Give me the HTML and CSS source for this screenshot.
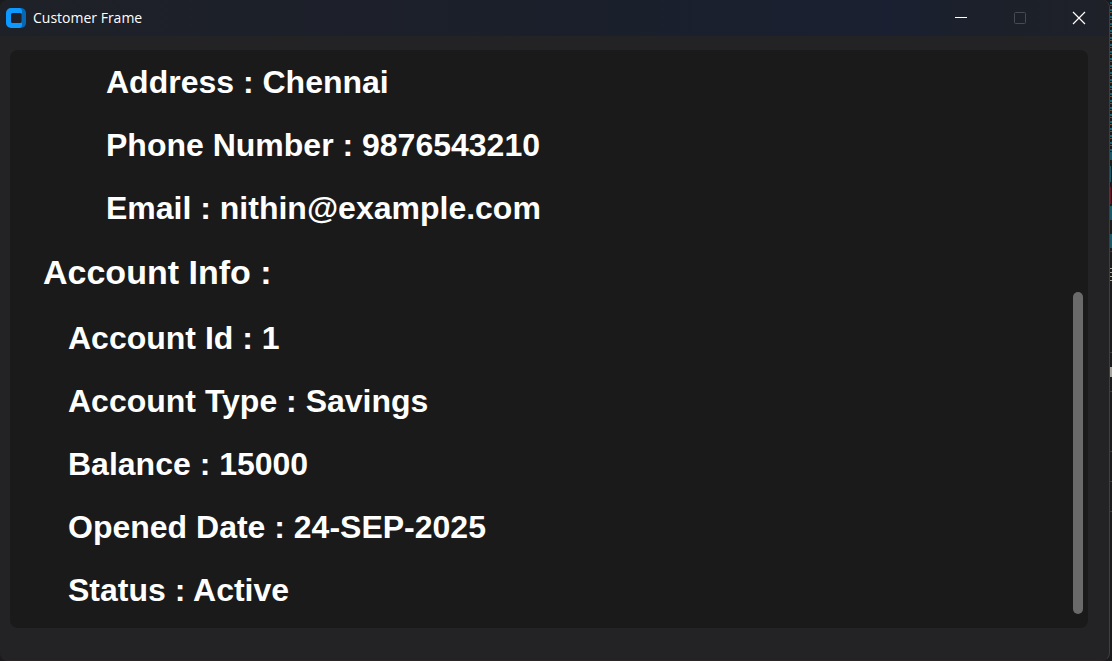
FILE: index.html
```html
<!DOCTYPE html>
<html lang="en">
<head>
<meta charset="utf-8">
<title>Customer Frame</title>
<link rel="stylesheet" href="styles.css">
</head>
<body>
<div class="desktop">
  <div class="window">
    <header class="titlebar">
      <svg class="logo" width="20" height="20" viewBox="0 0 20 20" aria-hidden="true">
        <path d="M11 0h4a5 5 0 0 1 5 5v10a5 5 0 0 1-5 5h-4z" fill="#0667b5"/>
        <path fill-rule="evenodd" d="M5 0h9l2 2v3l-1.500 1.500V13.500L16 15v3l-2 2H5a5 5 0 0 1-5-5V5a5 5 0 0 1 5-5z" fill="#0d99ff"/>
        <rect x="5" y="5" width="10.500" height="10" rx="1.500" fill="#1e2129"/>
      </svg>
      <h1 class="title">Customer Frame</h1>
      <div class="controls">
        <button class="control" aria-label="Minimize"><svg width="14" height="14" viewBox="0 0 14 14"><path d="M1 6.500h12" stroke="#fff"/></svg></button>
        <button class="control" aria-label="Maximize" disabled><svg width="14" height="14" viewBox="0 0 14 14"><rect x="1.500" y="1.500" width="11" height="11" rx="1" fill="none" stroke="#474a53"/></svg></button>
        <button class="control" aria-label="Close"><svg width="14" height="14" viewBox="0 0 14 14"><path d="M1 1l12 12M13 1L1 13" stroke="#fff" stroke-width="1.200"/></svg></button>
      </div>
    </header>
    <main class="panel">
      <div class="content">
        <div class="group nested">
          <p class="row">Address : Chennai</p>
          <p class="row">Phone Number : 9876543210</p>
          <p class="row">Email : nithin@example.com</p>
        </div>
        <h2 class="heading">Account Info :</h2>
        <div class="group">
          <p class="row">Account Id : 1</p>
          <p class="row">Account Type : Savings</p>
          <p class="row">Balance : 15000</p>
          <p class="row">Opened Date : 24-SEP-2025</p>
          <p class="row">Status : Active</p>
        </div>
      </div>
      <div class="scrollbar"><div class="thumb"></div></div>
    </main>
  </div>
  <svg class="backdrop" viewBox="0 0 2 661" preserveAspectRatio="none" aria-hidden="true">
    <path d="M1 2v150" stroke="#176477" stroke-width="2" stroke-dasharray="2 5"/>
    <path d="M1 5v145" stroke="#6b4e3b" stroke-width="2" stroke-dasharray="1 6"/>
    <path d="M1 152v8M1 206v14M1 234v14" stroke="#1a5a68" stroke-width="2"/>
    <path d="M0 166v16" stroke="#1a5a68" stroke-width="2"/>
    <path d="M0 187v17" stroke="#6b1624" stroke-width="2"/>
    <path d="M1 268v13" stroke="#a3a39b" stroke-width="2" stroke-dasharray="1 3"/>
    <path d="M1 367v10" stroke="#a3a39b" stroke-width="2"/>
    <path d="M1 251v1M1 352v1M1 391v1M1 451v1M1 481v1M1 511v1" stroke="#3b3b3d" stroke-width="2"/>
  </svg>
</div>
</body>
</html>
```
FILE: styles.css
```css
* { box-sizing: border-box; }
body {
  margin: 0;
  background: #1b1a1c;
  color: #fff;
  font-family: "Liberation Sans", Arial, sans-serif;
}
.desktop {
  display: flex;
  min-height: 100vh;
}
.window {
  flex: 1;
  display: flex;
  flex-direction: column;
  border-right: 1px solid #3e3f42;
  border-bottom: 1px solid #2c2527;
  border-radius: 8px;
  background: #232325;
  overflow: hidden;
}
.backdrop {
  width: 2px;
  height: 100vh;
}
.titlebar {
  display: flex;
  align-items: center;
  height: 36px;
  padding: 0 1px 0 6px;
  background: linear-gradient(90deg, #1e2127, #1b1f2b 50%, #1a2031 80%, #1c202a 90%, #1e2128);
}
.title {
  flex: 1;
  margin: 0 0 0 7px;
  font: 400 14px/20px "Open Sans", "Noto Sans", sans-serif;
}
.controls { display: flex; }
.control {
  display: flex;
  align-items: center;
  justify-content: center;
  width: 59px;
  height: 36px;
  padding: 0;
  border: 0;
  background: none;
}
.panel {
  display: flex;
  flex: 1;
  margin: 14px 21px 32px 10px;
  border-radius: 8px;
  background: #1a1a1a;
}
.content {
  flex: 1;
  padding: 1px 0 5px 33px;
}
.group { padding-left: 25px; }
.nested { padding-left: 63px; }
.row {
  margin: 0;
  font-size: 32px;
  font-weight: 700;
  line-height: 63px;
}
.heading {
  margin: 0 0 3px;
  font-size: 34px;
  line-height: 64px;
}
.scrollbar {
  display: flex;
  flex-direction: column;
  justify-content: flex-end;
  width: 15px;
  padding: 14px 5px 14px 0;
}
.thumb {
  height: 58.5%;
  border-radius: 5px;
  background: #6a6a6a;
}
```
